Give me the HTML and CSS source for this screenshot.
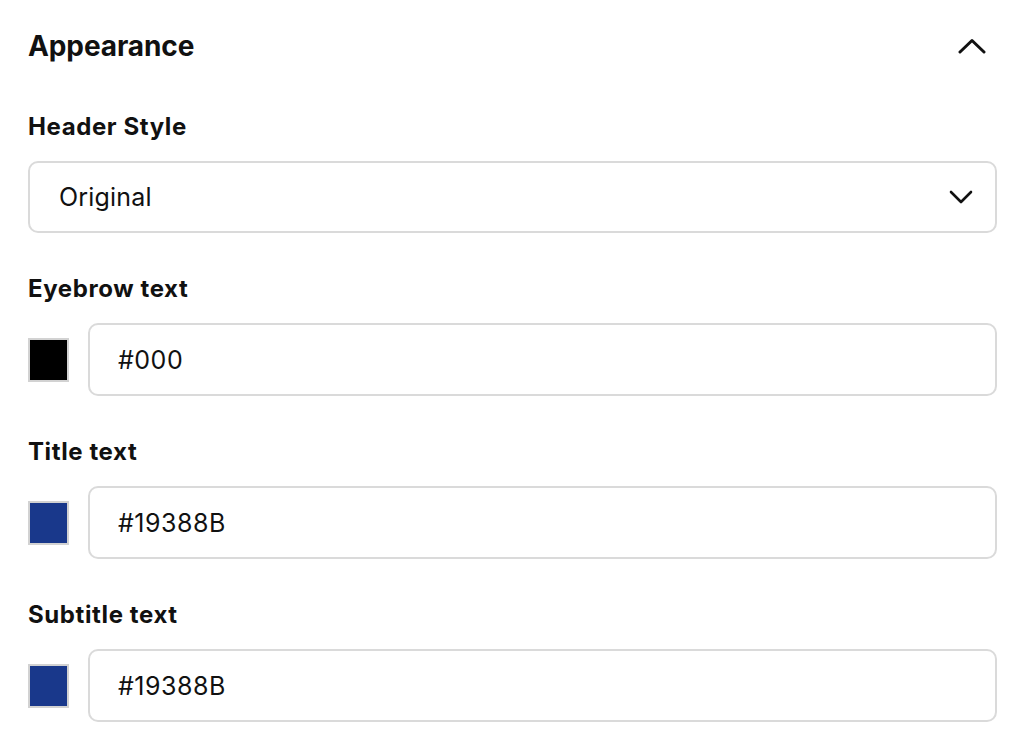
FILE: index.html
```html
<!DOCTYPE html>
<html>
<head>
 <link rel="stylesheet" href="styles.css">
</head>
<body>
<div class="panel">
   <div class="panelhead">
      <h2 class="paneltitle">Appearance</h2>
      <svg class="toggle" width="28" height="16" viewBox="0 0 28 16">
         <polyline points="2,14 14,2.5 26,14" fill="none" stroke="#111" stroke-width="3" stroke-linecap="round" stroke-linejoin="round"/>
      </svg>
   </div>

   <div class="field">
      <label class="fieldlabel" for="headerstyle">Header Style</label>
      <div class="selectbox" id="headerstyle">
         <span class="boxtext">Original</span>
         <svg class="caret" width="24" height="14" viewBox="0 0 24 14">
            <polyline points="2,2 12,12 22,2" fill="none" stroke="#111" stroke-width="2.6" stroke-linecap="round" stroke-linejoin="round"/>
         </svg>
      </div>
   </div>

   <div class="field">
      <label class="fieldlabel" for="eyebrow">Eyebrow text</label>
      <div class="colorrow">
         <span class="swatch" style="background:#000"></span>
         <input class="colorinput" id="eyebrow" type="text" value="#000">
      </div>
   </div>

   <div class="field">
      <label class="fieldlabel" for="titlecolor">Title text</label>
      <div class="colorrow">
         <span class="swatch" style="background:#19388B"></span>
         <input class="colorinput" id="titlecolor" type="text" value="#19388B">
      </div>
   </div>

   <div class="field">
      <label class="fieldlabel" for="subtitlecolor">Subtitle text</label>
      <div class="colorrow">
         <span class="swatch" style="background:#19388B"></span>
         <input class="colorinput" id="subtitlecolor" type="text" value="#19388B">
      </div>
   </div>
</div>
</body>
</html>
```

FILE: styles.css
```css
body {
   margin: 0;
   background: #fff;
   color: #111;
   font-family: Inter, "Liberation Sans", Arial, sans-serif;
}

.panel {
   padding: 24px 27px 0 28px;
   display: flex;
   flex-direction: column;
   gap: 41px;
}

.panelhead {
   display: flex;
   align-items: center;
   justify-content: space-between;
   height: 44px;
   margin-bottom: 3px;
}

.paneltitle {
   margin: 0;
   font-size: 28px;
   font-weight: 700;
   letter-spacing: -0.1px;
}

.toggle {
   margin-right: 11px;
}

.field {
   display: flex;
   flex-direction: column;
}

.fieldlabel {
   display: block;
   height: 30px;
   line-height: 30px;
   margin-bottom: 19px;
   font-size: 24px;
   font-weight: 700;
   letter-spacing: 0.6px;
}

.selectbox {
   box-sizing: border-box;
   height: 72px;
   border: 2px solid #dadada;
   border-radius: 10px;
   padding: 0 22px 0 29px;
   display: flex;
   align-items: center;
   justify-content: space-between;
}

.boxtext {
   font-size: 25px;
   letter-spacing: 0.2px;
}

.colorrow {
   display: flex;
   align-items: center;
   gap: 19px;
}

.swatch {
   box-sizing: border-box;
   width: 41px;
   height: 44px;
   border: 2px solid #d2d2d2;
}

.colorinput {
   flex: 1;
   box-sizing: border-box;
   height: 73px;
   border: 2px solid #dadada;
   border-radius: 10px;
   padding: 0 28px;
   font-family: Inter, "Liberation Sans", Arial, sans-serif;
   font-size: 25px;
   letter-spacing: 0.5px;
   color: #111;
   outline: none;
}
```
